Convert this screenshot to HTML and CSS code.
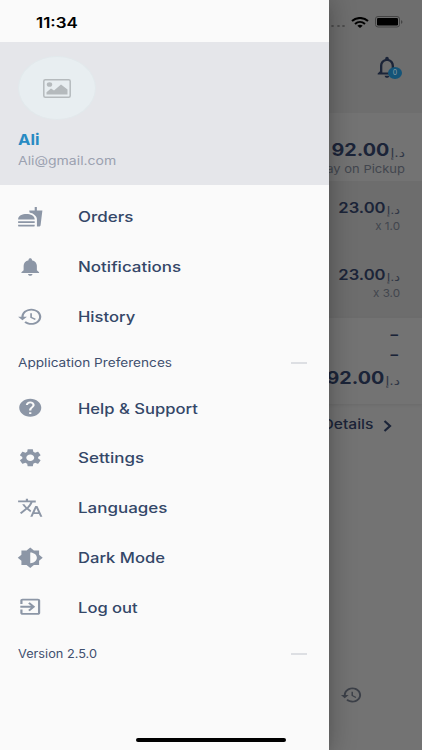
FILE: index.html
```
<!DOCTYPE html>
<html lang="en">
<head>
<meta charset="utf-8">
<title>Menu</title>
<link rel="stylesheet" href="styles.css">
</head>
<body>
<svg width="0" height="0" class="defs">
  <symbol id="history" viewBox="0 0 24 24" preserveAspectRatio="none"><path d="M13 3c-4.97 0-9 4.03-9 9H1l3.89 3.89.07.14L9 12H6c0-3.87 3.13-7 7-7s7 3.13 7 7-3.13 7-7 7c-1.93 0-3.68-.79-4.94-2.06l-1.42 1.42C8.27 19.99 10.51 21 13 21c4.97 0 9-4.03 9-9s-4.03-9-9-9zm-1 5v5l4.28 2.54.72-1.21-3.5-2.08V8H12z"/></symbol>
</svg>
<div class="screen">
  <main class="page">
    <header class="topbar">
      <div class="status">
        <span class="signal"><i></i><i></i><i></i><i></i></span>
        <svg class="wifi" viewBox="0 0 18 11" preserveAspectRatio="none"><g fill="none" stroke="#000" stroke-width="2"><path d="M1 4.1C5.5-.1 12.500-.1 17 4.100"/><path d="M4 7c3-2.700 7-2.700 10 0"/></g><path d="M6.300 8.700c1.700-1.400 3.700-1.400 5.400 0L9 11z"/></svg>
        <svg class="battery" viewBox="0 0 28 12"><rect x=".5" y=".5" width="24" height="10.500" rx="2.500" fill="none" stroke="#444"/><rect x="2" y="2" width="21" height="7.500" rx="1.300"/><path d="M26 4v4q1.500-.8 1.500-2T26 4z" fill="#444"/></svg>
      </div>
      <div class="bell">
        <svg viewBox="0 0 24 24" preserveAspectRatio="none"><path d="M12 22c1.100 0 2-.9 2-2h-4c0 1.100.9 2 2 2zm6-6v-5c0-3.070-1.630-5.640-4.500-6.320V4c0-.83-.67-1.500-1.500-1.500s-1.500.67-1.500 1.500v.68C7.640 5.360 6 7.920 6 11v5l-2 2v1h16v-1l-2-2zm-2 1H8v-6c0-2.480 1.510-4.500 4-4.500s4 2.020 4 4.500v6z"/></svg>
        <span class="badge">0</span>
      </div>
    </header>
    <section class="summary">
      <div class="price big"><b>92.00</b><span class="cur" dir="rtl">د.إ</span></div>
      <div class="sub">Pay on Pickup</div>
    </section>
    <section class="items">
      <div class="item"><div class="price"><b>23.00</b><span class="cur" dir="rtl">د.إ</span></div><div class="qty">x 1.0</div></div>
      <div class="item"><div class="price"><b>23.00</b><span class="cur" dir="rtl">د.إ</span></div><div class="qty">x 3.0</div></div>
    </section>
    <section class="totals">
      <div class="dash">–</div>
      <div class="dash">–</div>
      <div class="price big"><b>92.00</b><span class="cur" dir="rtl">د.إ</span></div>
    </section>
    <div class="details"><span>Details</span><svg viewBox="0 0 9 12"><path d="M1.500 1l5.500 5-5.500 5" fill="none" stroke="#1b2438" stroke-width="2.200"/></svg></div>
    <nav class="tabs"><svg><use href="#history"/></svg></nav>
  </main>

  <aside class="drawer">
    <div class="clock"><span>11:34</span></div>
    <div class="profile">
      <div class="avatar"><svg viewBox="0 0 28 19" preserveAspectRatio="none"><rect x=".8" y=".8" width="26.400" height="17.400" rx="1.500" fill="none" stroke="#b5babd" stroke-width="1.500"/><ellipse cx="6.500" cy="5.500" rx="2.700" ry="2.300"/><path d="M3.500 15.500v-2.300l4.500-3.700 3 2L18 5.500l6.500 5v5z"/></svg></div>
      <div class="name"><span>Ali</span></div>
      <div class="mail"><span>Ali@gmail.com</span></div>
    </div>
    <nav class="menu">
      <a class="row"><svg viewBox="0 0 24 24" preserveAspectRatio="none"><path d="M18.060 22.990h1.660c.84 0 1.530-.64 1.630-1.460L23 5.050h-5V1h-1.970v4.050h-4.970l.3 2.340c1.710.47 3.310 1.320 4.270 2.260 1.440 1.420 2.430 2.890 2.430 5.290v8.050zM1 21.990V21h15.030v.99c0 .55-.45 1-1.010 1H2.010c-.56 0-1.010-.45-1.010-1zm15.030-7c0-8-15.030-8-15.030 0h15.030zM1.020 17h15v2h-15z"/></svg><span class="wide">Orders</span></a>
      <a class="row"><svg viewBox="0 0 24 24" preserveAspectRatio="none"><path d="M12 22c1.100 0 2-.9 2-2h-4c0 1.100.89 2 2 2zm6-6v-5c0-3.070-1.640-5.640-4.500-6.320V4c0-.83-.67-1.500-1.500-1.500s-1.500.67-1.500 1.500v.68C7.630 5.360 6 7.920 6 11v5l-2 2v1h16v-1l-2-2z"/></svg><span class="wide">Notifications</span></a>
      <a class="row"><svg><use href="#history"/></svg><span>History</span></a>
      <div class="section"><span>Application Preferences</span><i></i></div>
      <a class="row"><svg viewBox="0 0 24 24" preserveAspectRatio="none"><path d="M12 2C6.480 2 2 6.480 2 12s4.480 10 10 10 10-4.480 10-10S17.520 2 12 2zm1 17h-2v-2h2v2zm2.070-7.750l-.9.92C13.450 12.900 13 13.500 13 15h-2v-.5c0-1.100.45-2.100 1.170-2.830l1.240-1.260c.37-.36.59-.86.59-1.410 0-1.100-.9-2-2-2s-2 .9-2 2H8c0-2.210 1.790-4 4-4s4 1.790 4 4c0 .88-.36 1.680-.93 2.250z"/></svg><span>Help &amp; Support</span></a>
      <a class="row"><svg viewBox="0 0 24 24" preserveAspectRatio="none"><path d="M19.140 12.940c.04-.3.060-.61.060-.94 0-.32-.02-.64-.07-.94l2.030-1.580c.18-.14.23-.41.12-.61l-1.920-3.320c-.12-.22-.37-.29-.59-.22l-2.390.96c-.5-.38-1.030-.7-1.620-.94l-.36-2.540c-.04-.24-.24-.41-.48-.41h-3.840c-.24 0-.43.17-.47.41l-.36 2.540c-.59.24-1.130.57-1.620.94l-2.390-.96c-.22-.08-.47 0-.59.22L2.740 8.870c-.12.21-.08.47.12.61l2.030 1.580c-.05.3-.09.63-.09.94s.02.64.07.94l-2.030 1.580c-.18.14-.23.41-.12.61l1.920 3.320c.12.22.37.29.59.22l2.390-.96c.5.38 1.030.7 1.620.94l.36 2.540c.05.24.24.41.48.41h3.840c.24 0 .44-.17.47-.41l.36-2.540c.59-.24 1.130-.56 1.620-.94l2.390.96c.22.08.47 0 .59-.22l1.920-3.320c.12-.22.07-.47-.12-.61l-2.010-1.580zM12 15.600c-1.980 0-3.600-1.620-3.600-3.600s1.620-3.600 3.600-3.600 3.600 1.620 3.600 3.600-1.620 3.600-3.600 3.600z"/></svg><span class="wide">Settings</span></a>
      <a class="row"><svg viewBox="0 0 24 24" preserveAspectRatio="none"><path d="M12.870 15.070l-2.540-2.510.03-.03c1.740-1.940 2.980-4.170 3.710-6.530H17V4h-7V2H8v2H1v1.990h11.170C11.500 7.920 10.440 9.750 9 11.350 8.070 10.320 7.300 9.190 6.690 8h-2c.73 1.630 1.730 3.170 2.980 4.560l-5.090 5.020L4 19l5-5 3.110 3.110.76-2.040zM18.500 10h-2L12 22h2l1.120-3h4.750L21 22h2l-4.500-12zm-2.620 7l1.620-4.330L19.120 17h-3.240z"/></svg><span class="wide">Languages</span></a>
      <a class="row"><svg viewBox="0 0 24 24" preserveAspectRatio="none"><path d="M20 15.310L23.310 12 20 8.690V4h-4.690L12 .69 8.690 4H4v4.690L.69 12 4 15.310V20h4.690L12 23.310 15.310 20H20v-4.690zM12 18V6c3.310 0 6 2.690 6 6s-2.690 6-6 6z"/></svg><span>Dark Mode</span></a>
      <a class="row"><svg viewBox="0 0 24 24" preserveAspectRatio="none"><path d="M10.090 15.590L11.500 17l5-5-5-5-1.410 1.410L12.670 11H3v2h9.670l-2.580 2.590zM19 3H5c-1.110 0-2 .9-2 2v4h2V5h14v14H5v-4H3v4c0 1.100.89 2 2 2h14c1.100 0 2-.9 2-2V5c0-1.100-.9-2-2-2z"/></svg><span>Log out</span></a>
      <div class="section"><span class="version">Version 2.5.0</span><i></i></div>
    </nav>
  </aside>
  <div class="home"></div>
</div>
</body>
</html>
```
FILE: styles.css
```
* { box-sizing: border-box; }
body { margin: 0; font-family: Inter, "DejaVu Sans", sans-serif; }
.defs { position: absolute; }
.screen { position: relative; width: 422px; height: 750px; overflow: hidden; }

.page { height: 750px; display: flex; flex-direction: column; background: #737373; color: #1b2438; }
.topbar { height: 113px; background: #6e6e6e; display: flex; flex-direction: column; align-items: flex-end; }
.status { height: 42px; padding: 2px 19px 0 0; display: flex; align-items: center; }
.signal { display: flex; gap: 2.500px; margin: 8px 6px 0 0; }
.signal i { width: 3px; height: 2px; border-radius: 50%; background: #4c4c4c; }
.wifi { width: 18px; height: 11px; margin-right: 6px; }
.battery { width: 28px; height: 12px; }
.bell { position: relative; width: 28px; height: 26px; margin: 12px 21px 0 0; }
.bell svg { width: 28px; height: 26px; fill: #1b2438; }
.badge { position: absolute; left: 15px; top: 13px; width: 14px; height: 12px; border-radius: 50%; background: #145478; color: #8d9ba3; font-size: 7px; line-height: 11px; text-align: center; }

.price { display: flex; justify-content: flex-end; align-items: baseline; font-size: 14.300px; line-height: 20px; transform: scaleX(1.160); transform-origin: right; }
.price b { font-weight: 600; }
.price.big { font-size: 17px; line-height: 24px; }
.price.big b { font-weight: 700; }
.cur { font-family: "DejaVu Sans", sans-serif; font-size: 11px; margin-left: 1px; color: #303746; transform: translateY(1px); }
.big .cur { font-size: 12px; }
.summary { height: 68px; padding: 25px 17px 0 0; text-align: right; }
.sub { margin-top: -2px; font-size: 11px; line-height: 15px; color: #42464e; transform: scaleX(1.180); transform-origin: right; }
.items { height: 137px; padding: 17px 22px 0 0; background: #6d6d6d; }
.item { height: 67px; text-align: right; }
.qty { margin-top: -1px; font-size: 11px; line-height: 15px; color: #42464e; transform: scaleX(1.060); transform-origin: right; }
.totals { height: 86px; padding: 6px 22px 0 0; box-shadow: 0 1px 3px #6a6a6a; text-align: right; }
.dash { height: 20px; font-size: 15px; line-height: 21px; font-weight: 600; margin-right: 2px; }
.totals .price { margin-top: 2px; }
.details { height: 40px; padding-right: 30px; display: flex; justify-content: flex-end; align-items: center; gap: 10px; font-size: 13px; font-weight: 500; }
.details span { transform: scaleX(1.200); transform-origin: right; }
.details svg { width: 9px; height: 12px; margin-top: 3px; }
.tabs { margin-top: auto; height: 68px; padding: 3px 59px 0 0; display: flex; justify-content: flex-end; }
.tabs svg { width: 23px; height: 20px; fill: #3c4048; }

.drawer { position: absolute; left: 0; top: 0; width: 328.500px; height: 750px; background: #fafafa; box-shadow: 0 8px 10px -5px rgba(0,0,0,.2), 0 0 24px 2px rgba(0,0,0,.26); }
.drawer span { display: inline-block; transform: scaleX(1.185); transform-origin: left; white-space: nowrap; }
.drawer .wide { transform: scaleX(1.212); }
.drawer .version { transform: scaleX(1.108); }
.clock { height: 42px; padding: 14px 0 0 36px; font-size: 14px; line-height: 17px; font-weight: 600; color: #000; }
.drawer .clock span { transform: scaleX(1.210); }
.profile { height: 143px; padding: 14px 18px 0 17.500px; background: #e5e6ea; }
.avatar { width: 78px; height: 64px; border-radius: 50%; background: #e8eef1; border: 1px solid #e2e9ec; display: flex; align-items: center; justify-content: center; }
.avatar svg { width: 28px; height: 19px; fill: #b5babd; }
.name { margin-top: 8px; font-size: 15px; line-height: 23px; font-weight: 700; color: #288bc3; }
.drawer .name span { transform: scaleX(1.110); }
.mail { font-size: 12px; line-height: 19px; color: #9ba1b0; }
.drawer .mail span { transform: scaleX(1.168); }
.menu { padding-top: 7px; }
.row { height: 49.750px; display: flex; align-items: center; padding-left: 17px; font-size: 14px; font-weight: 500; color: #344768; }
.row svg { width: 26.500px; height: 21.500px; margin-right: 34.500px; fill: #8c96a6; flex: none; }
.section { height: 42px; padding: 1px 22px 0 17.500px; display: flex; align-items: center; justify-content: space-between; font-size: 11.500px; color: #3f506f; }
.section i { width: 16px; height: 2px; background: #dddfe3; }
.home { position: absolute; left: 136px; top: 738px; width: 150px; height: 4px; border-radius: 2px; background: #000; }
```
